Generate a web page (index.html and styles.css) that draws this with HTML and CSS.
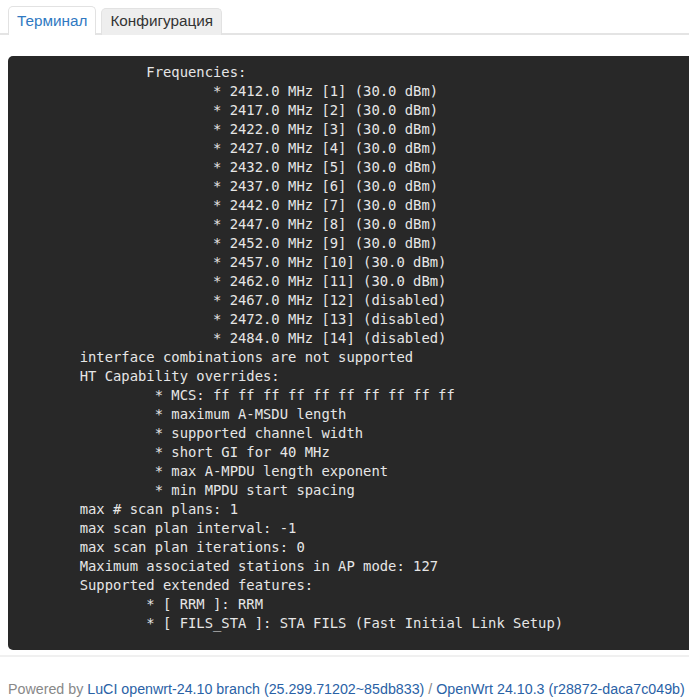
FILE: index.html
```html
<!DOCTYPE html>
<html lang="ru">
<head>
<meta charset="utf-8">
<title>Терминал</title>
<link rel="stylesheet" href="styles.css">
</head>
<body>
<div class="page">
  <ul class="tabs">
    <li class="tab active"><a href="#">Терминал</a></li>
    <li class="tab"><a href="#">Конфигурация</a></li>
  </ul>
  <div class="content">
<pre class="terminal">                Frequencies:
                        * 2412.0 MHz [1] (30.0 dBm)
                        * 2417.0 MHz [2] (30.0 dBm)
                        * 2422.0 MHz [3] (30.0 dBm)
                        * 2427.0 MHz [4] (30.0 dBm)
                        * 2432.0 MHz [5] (30.0 dBm)
                        * 2437.0 MHz [6] (30.0 dBm)
                        * 2442.0 MHz [7] (30.0 dBm)
                        * 2447.0 MHz [8] (30.0 dBm)
                        * 2452.0 MHz [9] (30.0 dBm)
                        * 2457.0 MHz [10] (30.0 dBm)
                        * 2462.0 MHz [11] (30.0 dBm)
                        * 2467.0 MHz [12] (disabled)
                        * 2472.0 MHz [13] (disabled)
                        * 2484.0 MHz [14] (disabled)
        interface combinations are not supported
        HT Capability overrides:
                 * MCS: ff ff ff ff ff ff ff ff ff ff
                 * maximum A-MSDU length
                 * supported channel width
                 * short GI for 40 MHz
                 * max A-MPDU length exponent
                 * min MPDU start spacing
        max # scan plans: 1
        max scan plan interval: -1
        max scan plan iterations: 0
        Maximum associated stations in AP mode: 127
        Supported extended features:
                * [ RRM ]: RRM
                * [ FILS_STA ]: STA FILS (Fast Initial Link Setup)
</pre>
  </div>
  <footer class="footer">
    <span class="muted">Powered by</span>
    <a href="#">LuCI openwrt-24.10 branch (25.299.71202~85db833)</a>
    <span class="muted">/</span>
    <a href="#">OpenWrt 24.10.3 (r28872-daca7c049b)</a>
  </footer>
</div>
</body>
</html>
```

FILE: styles.css
```css
html, body {
  margin: 0;
  padding: 0;
  background: #fff;
  overflow: hidden;
}

.page {
  font-family: "Liberation Sans", Arial, sans-serif;
}

.tabs {
  list-style: none;
  margin: 6px 0 0 0;
  padding: 0 0 0 8px;
  display: flex;
  gap: 5px;
  border-bottom: 2px solid #e4e4e4;
  height: 27px;
}

.tab {
  margin-bottom: -2px;
}

.tab a {
  display: block;
  height: 27px;
  box-sizing: border-box;
  padding: 2px 8px 0 8px;
  font-size: 15.3px;
  line-height: 20px;
  text-decoration: none;
  color: #333;
  background: #eee;
  border: 1px solid #e2e2e2;
  border-bottom: none;
  border-radius: 5px 5px 0 0;
  margin-top: 2px;
}

.tab.active a {
  color: #3079c2;
  background: #fff;
  border-color: #e2e2e2;
  height: 29px;
  margin-top: 0;
  padding-top: 4px;
}

.content {
  padding: 21px 0 5px 8px;
  border-bottom: 2px solid #f0f0f0;
}

.terminal {
  margin: 0;
  padding: 7px 0 17px 5px;
  background: #282828;
  color: #e6e6e6;
  font-family: "DejaVu Sans Mono", monospace;
  font-size: 13.85px;
  line-height: 19px;
  border-radius: 5px 0 0 5px;
  overflow: hidden;
}

.footer {
  padding: 22px 0 0 8px;
  font-size: 14.25px;
  line-height: 20px;
  white-space: nowrap;
}

.footer .muted {
  color: #888;
}

.footer a {
  color: #2a62a6;
  text-decoration: none;
}
```
